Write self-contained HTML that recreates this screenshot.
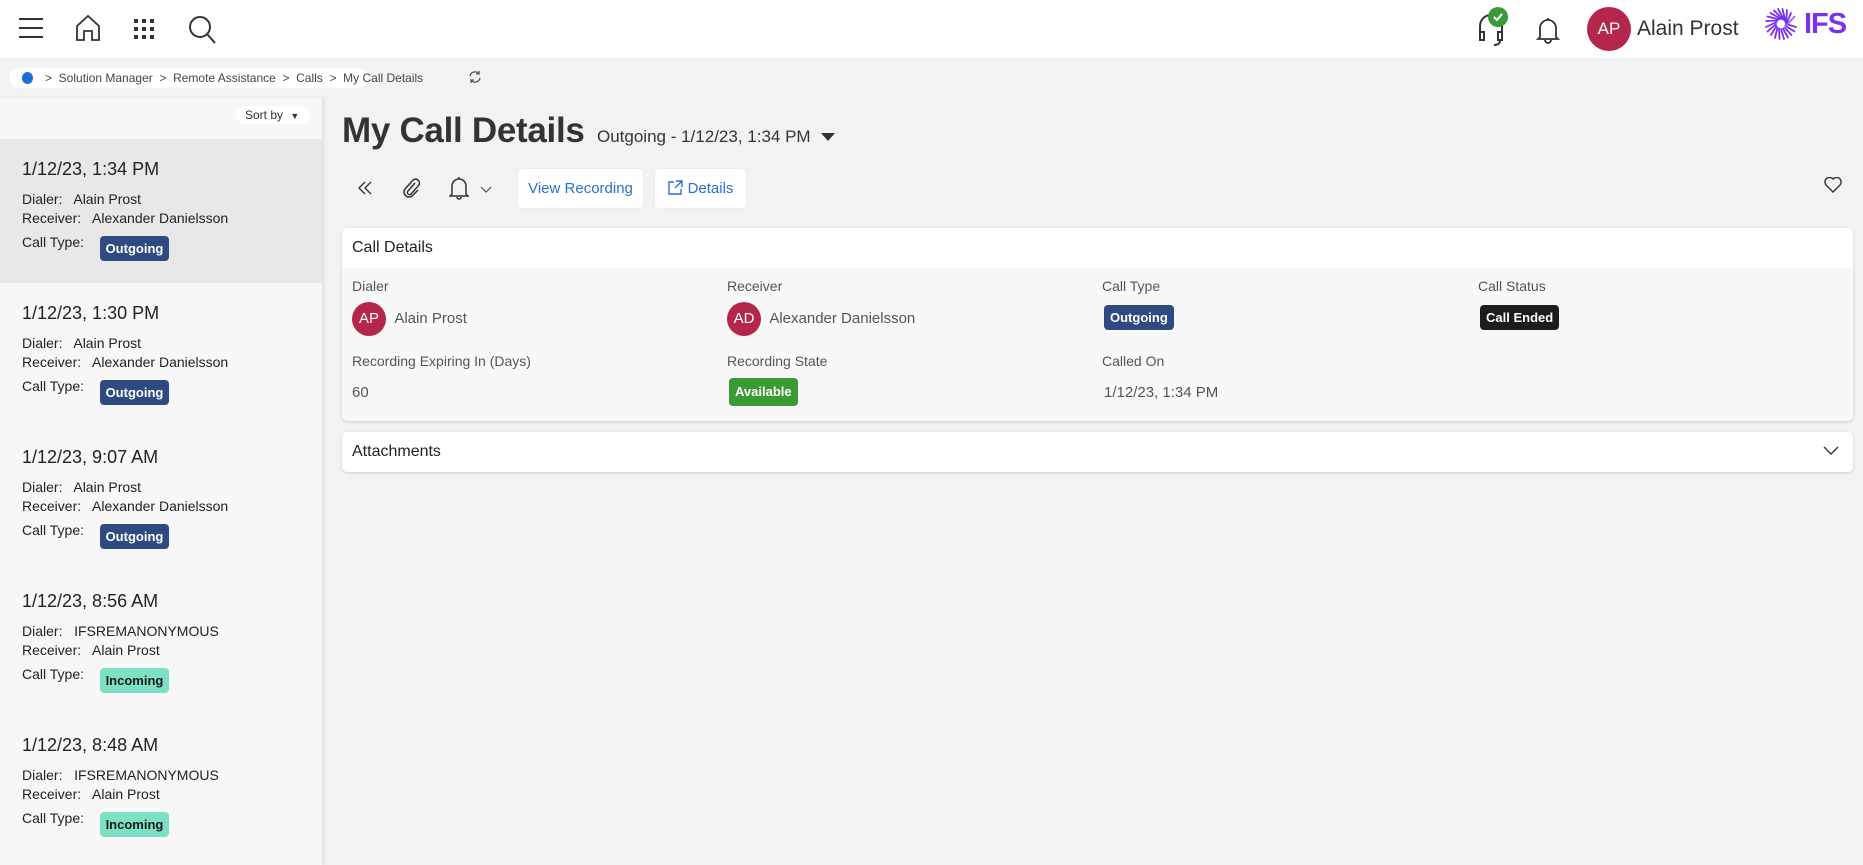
<!DOCTYPE html>
<html><head><meta charset="utf-8"><style>
*{margin:0;padding:0;box-sizing:border-box}
body{width:1863px;height:865px;overflow:hidden;background:#f2f1f4;font-family:"Liberation Sans",sans-serif;color:#333;position:relative}
.a{position:absolute}
.hdr{left:0;top:0;width:1863px;height:58px;background:#fff}
.bc{left:9px;top:68px;width:359px;height:20px;background:#fff;border-radius:10px;font-size:12px;color:#444;line-height:20px;padding-left:36px;white-space:nowrap}
.panel{left:0;top:98px;width:322px;height:767px;background:#f7f7f7;box-shadow:2px 0 3px rgba(0,0,0,.08)}
.item{position:absolute;left:0;width:322px;height:144px}
.item .d{position:absolute;left:22px;top:20px;font-size:18px;color:#222}
.item .l{position:absolute;left:22px;font-size:14px;color:#222}
.badge{display:inline-block;color:#fff;font-weight:bold;font-size:13px;border-radius:4px;padding:0 6px;height:25px;line-height:25px}
.out{background:#2f4a80}.inc{background:#7de0c6;color:#1a1a1a}
.card{background:#fff;border-radius:5px;box-shadow:0 1px 3px rgba(0,0,0,.15)}
.lab{font-size:14px;color:#555}
.val{font-size:15px;color:#555}
.av{display:inline-block;width:34px;height:34px;border-radius:50%;background:#b5264c;color:#fff;font-size:15px;text-align:center;line-height:34px;vertical-align:middle}
.btn{background:#fff;border-radius:4px;height:39px;line-height:39px;color:#2b6fd3;font-size:15px;text-align:center;box-shadow:0 0 1px rgba(0,0,0,.15)}
</style></head><body>
<div class="a hdr"></div>
<svg class="a" style="left:18px;top:17px" width="26" height="22" viewBox="0 0 26 22" stroke="#333" stroke-width="2"><path d="M1 2h24M1 11h24M1 20h24"/></svg>
<svg class="a" style="left:75px;top:14px" width="26" height="28" viewBox="0 0 26 28" fill="none" stroke="#333" stroke-width="1.8"><path d="M2 12L13 2l11 10v14h-7v-9H9v9H2z"/></svg>
<svg class="a" style="left:134px;top:19px" width="20" height="20" viewBox="0 0 20 20" fill="#333"><rect x="0" y="0" width="4" height="4"/><rect x="8" y="0" width="4" height="4"/><rect x="16" y="0" width="4" height="4"/><rect x="0" y="8" width="4" height="4"/><rect x="8" y="8" width="4" height="4"/><rect x="16" y="8" width="4" height="4"/><rect x="0" y="16" width="4" height="4"/><rect x="8" y="16" width="4" height="4"/><rect x="16" y="16" width="4" height="4"/></svg>
<svg class="a" style="left:188px;top:15px" width="30" height="30" viewBox="0 0 30 30" fill="none" stroke="#333" stroke-width="2"><circle cx="12" cy="12" r="10"/><path d="M19 19l8 9"/></svg>
<svg class="a" style="left:1477px;top:12px" width="30" height="34" viewBox="0 0 30 34" fill="none" stroke="#333" stroke-width="2"><path d="M3 22v-8a11 11 0 0 1 22 0v8"/><rect x="3" y="20" width="4" height="8" fill="#fff"/><rect x="21" y="20" width="4" height="8" fill="#fff"/><path d="M23 28q0 5-6 5"/></svg>
<div class="a" style="left:1488px;top:7px;width:20px;height:20px;border-radius:50%;background:#3a9a3a"></div>
<svg class="a" style="left:1492px;top:11px" width="12" height="12" viewBox="0 0 12 12" fill="none" stroke="#fff" stroke-width="2"><path d="M2 6l3 3 5-6"/></svg>
<svg class="a" style="left:1536px;top:16px" width="24" height="28" viewBox="0 0 24 28" fill="none" stroke="#333" stroke-width="1.8"><path d="M4 21V12a8 8 0 0 1 16 0v9l2 2H2z"/><path d="M9 24a3 3 0 0 0 6 0"/><path d="M12 2v2"/></svg>
<div class="a" style="left:1587px;top:7px;width:44px;height:44px;border-radius:50%;background:#b5264c;color:#fff;font-size:17px;line-height:44px;text-align:center">AP</div>
<div class="a" style="left:1637px;top:17px;font-size:21px;color:#333">Alain Prost</div>
<svg class="a" style="left:1765px;top:8px" width="32" height="32" viewBox="-16 -16 32 32">
<g stroke="#7b2ff0" stroke-width="1.8" stroke-linecap="round">
<path d="M5 0L15 3"/><path d="M4.6 2L13.5 7.5" /><path d="M3.5 3.5L10.5 11"/><path d="M2 4.6L7 13.5"/><path d="M0 5L3 15"/><path d="M-2 4.6L-1.5 15"/><path d="M-3.5 3.5L-6 14"/><path d="M-4.6 2L-10 11"/><path d="M-5 0L-13.5 7.5"/><path d="M-4.6 -2L-15 3"/><path d="M-3.5 -3.5L-15 -3"/><path d="M-2 -4.6L-13.5 -7.5"/><path d="M0 -5L-10.5 -11"/><path d="M2 -4.6L-7 -13.5"/><path d="M3.5 -3.5L-3 -15"/><path d="M4.6 -2L1.5 -15"/><path d="M5 0L6 -14"/><path d="M4.6 2L10 -11"/><path d="M3.5 3.5L13.5 -7.5" stroke="#9a6cf5"/></g></svg>
<div class="a" style="left:1804px;top:8px;font-size:29px;font-weight:bold;color:#7b2ff0;letter-spacing:-1px">IFS</div>

<div class="a bc">&gt;&nbsp; Solution Manager &nbsp;&gt;&nbsp; Remote Assistance &nbsp;&gt;&nbsp; Calls &nbsp;&gt;&nbsp; My Call Details</div>
<div class="a" style="left:22px;top:72px;width:11px;height:12px;border-radius:50%;background:#1a6fd6"></div>
<svg class="a" style="left:468px;top:70px" width="14" height="14" viewBox="0 0 14 14" fill="none" stroke="#555" stroke-width="1.3"><path d="M2 6a5 5 0 0 1 9-2M12 8a5 5 0 0 1-9 2"/><path d="M11 1v3H8M3 13v-3h3"/></svg>

<div class="a panel">
 <div class="a" style="left:236px;top:8px;width:74px;height:18px;background:#fff;border-radius:9px;font-size:12px;line-height:18px;padding-left:9px;color:#333">Sort by <span style="font-size:9px;margin-left:4px">&#9660;</span></div>
 <div class="item" style="top:41px;background:#e8e8e8"><div class="d">1/12/23, 1:34 PM</div><div class="l" style="top:52px">Dialer:&nbsp;&nbsp; Alain Prost</div><div class="l" style="top:71px">Receiver:&nbsp;&nbsp; Alexander Danielsson</div><div class="l" style="top:95px">Call Type:&nbsp;&nbsp;&nbsp; <span class="badge out" style="vertical-align:-6px">Outgoing</span></div></div>
 <div class="item" style="top:185px"><div class="d">1/12/23, 1:30 PM</div><div class="l" style="top:52px">Dialer:&nbsp;&nbsp; Alain Prost</div><div class="l" style="top:71px">Receiver:&nbsp;&nbsp; Alexander Danielsson</div><div class="l" style="top:95px">Call Type:&nbsp;&nbsp;&nbsp; <span class="badge out" style="vertical-align:-6px">Outgoing</span></div></div>
 <div class="item" style="top:329px"><div class="d">1/12/23, 9:07 AM</div><div class="l" style="top:52px">Dialer:&nbsp;&nbsp; Alain Prost</div><div class="l" style="top:71px">Receiver:&nbsp;&nbsp; Alexander Danielsson</div><div class="l" style="top:95px">Call Type:&nbsp;&nbsp;&nbsp; <span class="badge out" style="vertical-align:-6px">Outgoing</span></div></div>
 <div class="item" style="top:473px"><div class="d">1/12/23, 8:56 AM</div><div class="l" style="top:52px">Dialer:&nbsp;&nbsp; IFSREMANONYMOUS</div><div class="l" style="top:71px">Receiver:&nbsp;&nbsp; Alain Prost</div><div class="l" style="top:95px">Call Type:&nbsp;&nbsp;&nbsp; <span class="badge inc" style="vertical-align:-6px">Incoming</span></div></div>
 <div class="item" style="top:617px"><div class="d">1/12/23, 8:48 AM</div><div class="l" style="top:52px">Dialer:&nbsp;&nbsp; IFSREMANONYMOUS</div><div class="l" style="top:71px">Receiver:&nbsp;&nbsp; Alain Prost</div><div class="l" style="top:95px">Call Type:&nbsp;&nbsp;&nbsp; <span class="badge inc" style="vertical-align:-6px">Incoming</span></div></div>
</div>

<div class="a" style="left:342px;top:111px;font-size:35px;font-weight:bold;color:#333;letter-spacing:-.3px">My Call Details</div>
<div class="a" style="left:597px;top:127px;font-size:17px;color:#333">Outgoing - 1/12/23, 1:34 PM</div>
<svg class="a" style="left:821px;top:133px" width="14" height="8" viewBox="0 0 14 8"><path d="M0 0h14L7 8z" fill="#333"/></svg>

<svg class="a" style="left:357px;top:180px" width="16" height="16" viewBox="0 0 16 16" fill="none" stroke="#333" stroke-width="1.4"><path d="M8 2L2 8l6 6M14 2L8 8l6 6"/></svg>
<svg class="a" style="left:403px;top:177px" width="18" height="22" viewBox="0 0 18 22" fill="none" stroke="#333" stroke-width="1.5"><path d="M12 6L5 14a2 2 0 0 0 3 3l8-9a4 4 0 0 0-6-5L2 12a5 5 0 0 0 7 7l6-6"/></svg>
<svg class="a" style="left:449px;top:176px" width="20" height="24" viewBox="0 0 20 24" fill="none" stroke="#333" stroke-width="1.5"><path d="M3 18V10a7 7 0 0 1 14 0v8l2 2H1z"/><path d="M8 21a2 2 0 0 0 4 0"/><path d="M10 1v2"/></svg>
<svg class="a" style="left:480px;top:186px" width="12" height="8" viewBox="0 0 12 8" fill="none" stroke="#555" stroke-width="1.2"><path d="M1 1l5 5 5-5"/></svg>
<div class="a btn" style="left:518px;top:169px;width:125px">View Recording</div>
<div class="a btn" style="left:655px;top:169px;width:91px"><svg width="15" height="15" viewBox="0 0 15 15" fill="none" stroke="#2b6fd3" stroke-width="1.4" style="vertical-align:-2px;margin-right:5px"><path d="M6 2H1v12h12V9M8 1h6v6M14 1L7 8"/></svg>Details</div>
<svg class="a" style="left:1824px;top:177px" width="18" height="16" viewBox="0 0 18 16" fill="none" stroke="#333" stroke-width="1.4"><path d="M9 15L2 8a4 4 0 0 1 7-6 4 4 0 0 1 7 6z"/></svg>

<div class="a card" style="left:342px;top:228px;width:1511px;height:193px;overflow:hidden">
 <div style="height:40px;line-height:40px;padding-left:10px;font-size:16px;color:#222">Call Details</div>
 <div style="position:absolute;top:40px;left:0;right:0;bottom:0;background:#f8f8f8"></div>
 <div class="a lab" style="left:10px;top:50px">Dialer</div>
 <div class="a val" style="left:10px;top:74px"><span class="av">AP</span> &nbsp;Alain Prost</div>
 <div class="a lab" style="left:385px;top:50px">Receiver</div>
 <div class="a val" style="left:385px;top:74px"><span class="av">AD</span> &nbsp;Alexander Danielsson</div>
 <div class="a lab" style="left:760px;top:50px">Call Type</div>
 <div class="a" style="left:762px;top:77px"><span class="badge out">Outgoing</span></div>
 <div class="a lab" style="left:1136px;top:50px">Call Status</div>
 <div class="a" style="left:1138px;top:77px"><span class="badge" style="background:#1c1c1c">Call Ended</span></div>
 <div class="a lab" style="left:10px;top:125px">Recording Expiring In (Days)</div>
 <div class="a val" style="left:10px;top:156px">60</div>
 <div class="a lab" style="left:385px;top:125px">Recording State</div>
 <div class="a" style="left:387px;top:150px"><span class="badge" style="background:#3a9a34;height:28px;line-height:28px">Available</span></div>
 <div class="a lab" style="left:760px;top:125px">Called On</div>
 <div class="a val" style="left:762px;top:156px">1/12/23, 1:34 PM</div>
</div>

<div class="a card" style="left:342px;top:432px;width:1511px;height:40px">
 <div style="line-height:40px;padding-left:10px;font-size:16px;color:#222">Attachments</div>
 <svg class="a" style="right:14px;top:14px" width="16" height="10" viewBox="0 0 16 10" fill="none" stroke="#333" stroke-width="1.4"><path d="M1 1l7 7 7-7"/></svg>
</div>
</body></html>
